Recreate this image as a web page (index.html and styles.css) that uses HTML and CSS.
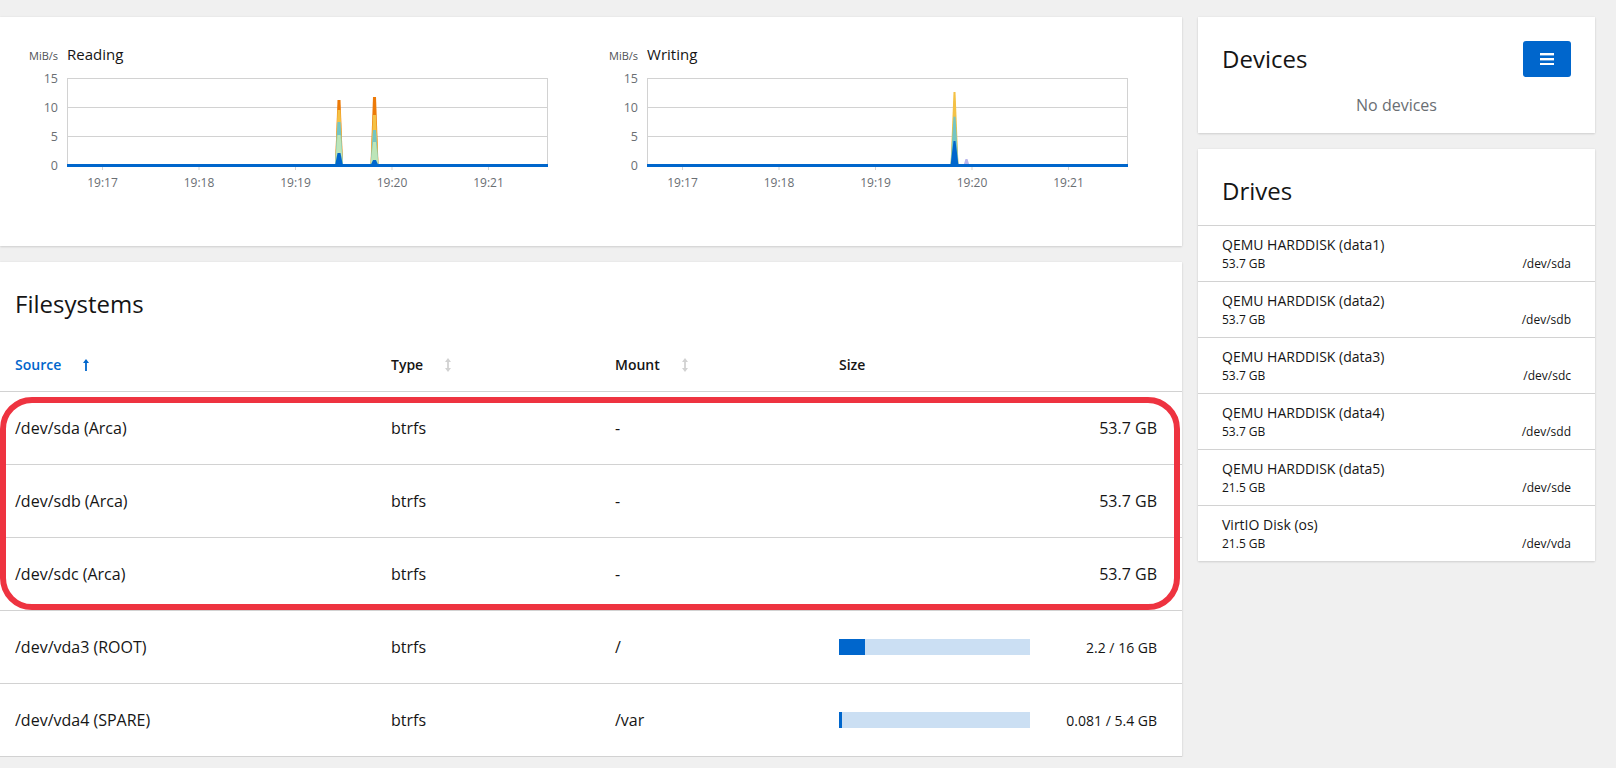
FILE: index.html
```html
<!DOCTYPE html>
<html lang="en">
<head>
<meta charset="utf-8">
<title>Storage</title>
<link rel="stylesheet" href="styles.css">
</head>
<body>
<div class="page">
  <div class="main-col">
    <section class="card charts-card">
      <div class="charts">
        <div class="chart">
          <div class="chart-head"><span class="unit">MiB/s</span><span class="chart-title">Reading</span></div>
          <svg class="plot" width="560" height="130" viewBox="0 0 560 130">
            <g class="grid">
              <line x1="38" y1="12.5" x2="519" y2="12.5"/>
              <line x1="38" y1="41.5" x2="519" y2="41.5"/>
              <line x1="38" y1="70.5" x2="519" y2="70.5"/>
              <line x1="38.5" y1="12.5" x2="38.5" y2="99.5"/>
              <line x1="518.5" y1="12.5" x2="518.5" y2="99.5"/>
              <line x1="73.5" y1="99.5" x2="73.5" y2="104"/>
              <line x1="170" y1="99.5" x2="170" y2="104"/>
              <line x1="266.5" y1="99.5" x2="266.5" y2="104"/>
              <line x1="363" y1="99.5" x2="363" y2="104"/>
              <line x1="459.5" y1="99.5" x2="459.5" y2="104"/>
            </g>
            <g class="ylab">
              <text x="29" y="12.5" dy="0.36em">15</text>
              <text x="29" y="41.5" dy="0.36em">10</text>
              <text x="29" y="70.5" dy="0.36em">5</text>
              <text x="29" y="99.5" dy="0.36em">0</text>
            </g>
            <g class="xlab">
              <text x="73.5" y="116.7" dy="0.36em">19:17</text>
              <text x="170" y="116.7" dy="0.36em">19:18</text>
              <text x="266.5" y="116.7" dy="0.36em">19:19</text>
              <text x="363" y="116.7" dy="0.36em">19:20</text>
              <text x="459.5" y="116.7" dy="0.36em">19:21</text>
            </g>
            <g class="spike">
              <polygon class="s-orange" points="306,99.5 308.5,34 311.5,34 314,99.5"/>
              <polygon class="s-yellow" points="306,99.5 308.5,44 311.5,44 314,99.5"/>
              <polygon class="s-teal" points="306,99.5 308.5,56 311.5,56 314,99.5"/>
              <polygon class="s-green" points="306,99.5 308.5,69 311.5,69 314,99.5"/>
              <polygon class="s-blue" points="306,99.5 308.5,87 311.5,87 314,99.5"/>
              <polygon class="s-orange" points="341.5,99.5 344,31 347,31 349.5,99.5"/>
              <polygon class="s-yellow" points="341.5,99.5 344,49 347,49 349.5,99.5"/>
              <polygon class="s-teal" points="341.5,99.5 344,64 347,64 349.5,99.5"/>
              <polygon class="s-green" points="341.5,99.5 344,76 347,76 349.5,99.5"/>
              <polygon class="s-blue" points="341.5,99.5 344,94 347,94 349.5,99.5"/>
            </g>
            <line class="baseline" x1="38" y1="99.5" x2="519" y2="99.5"/>
          </svg>
        </div>
        <div class="chart">
          <div class="chart-head"><span class="unit">MiB/s</span><span class="chart-title">Writing</span></div>
          <svg class="plot" width="560" height="130" viewBox="0 0 560 130">
            <g class="grid">
              <line x1="38" y1="12.5" x2="519" y2="12.5"/>
              <line x1="38" y1="41.5" x2="519" y2="41.5"/>
              <line x1="38" y1="70.5" x2="519" y2="70.5"/>
              <line x1="38.5" y1="12.5" x2="38.5" y2="99.5"/>
              <line x1="518.5" y1="12.5" x2="518.5" y2="99.5"/>
              <line x1="73.5" y1="99.5" x2="73.5" y2="104"/>
              <line x1="170" y1="99.5" x2="170" y2="104"/>
              <line x1="266.5" y1="99.5" x2="266.5" y2="104"/>
              <line x1="363" y1="99.5" x2="363" y2="104"/>
              <line x1="459.5" y1="99.5" x2="459.5" y2="104"/>
            </g>
            <g class="ylab">
              <text x="29" y="12.5" dy="0.36em">15</text>
              <text x="29" y="41.5" dy="0.36em">10</text>
              <text x="29" y="70.5" dy="0.36em">5</text>
              <text x="29" y="99.5" dy="0.36em">0</text>
            </g>
            <g class="xlab">
              <text x="73.5" y="116.7" dy="0.36em">19:17</text>
              <text x="170" y="116.7" dy="0.36em">19:18</text>
              <text x="266.5" y="116.7" dy="0.36em">19:19</text>
              <text x="363" y="116.7" dy="0.36em">19:20</text>
              <text x="459.5" y="116.7" dy="0.36em">19:21</text>
            </g>
            <g class="spike">
              <polygon class="s-yellow" points="341.5,99.5 344.5,26 346.5,26 349.5,99.5"/>
              <polygon class="s-teal" points="341.5,99.5 344.5,50.7 346.5,50.7 349.5,99.5"/>
              <polygon class="s-blue" points="341.5,99.5 344.5,75 346.5,75 349.5,99.5"/>
              <polygon class="s-lav" points="354.5,99.5 356.5,93 358.5,93 360.5,99.5"/>
            </g>
            <line class="baseline" x1="38" y1="99.5" x2="519" y2="99.5"/>
          </svg>
        </div>
      </div>
    </section>

    <section class="card fs-card">
      <h2 class="card-title fs-title">Filesystems</h2>
      <div class="fs-table">
        <div class="fs-row fs-head">
          <div class="cell sort active">Source
            <svg class="sort-icon" width="6" height="12" viewBox="0 0 6 12"><path d="M3 0 L6 4 L3.9 4 L3.9 12 L2.1 12 L2.1 4 L0 4 Z"/></svg>
          </div>
          <div class="cell sort">Type
            <svg class="sort-icon" width="6" height="14" viewBox="0 0 6 14"><path d="M3 0 L6 4 L3.9 4 L3.9 10 L6 10 L3 14 L0 10 L2.1 10 L2.1 4 L0 4 Z"/></svg>
          </div>
          <div class="cell sort">Mount
            <svg class="sort-icon" width="6" height="14" viewBox="0 0 6 14"><path d="M3 0 L6 4 L3.9 4 L3.9 10 L6 10 L3 14 L0 10 L2.1 10 L2.1 4 L0 4 Z"/></svg>
          </div>
          <div class="cell">Size</div>
        </div>
        <div class="fs-row">
          <div class="cell">/dev/sda (Arca)</div>
          <div class="cell">btrfs</div>
          <div class="cell">-</div>
          <div class="cell size"><span class="size-num">53.7 GB</span></div>
        </div>
        <div class="fs-row">
          <div class="cell">/dev/sdb (Arca)</div>
          <div class="cell">btrfs</div>
          <div class="cell">-</div>
          <div class="cell size"><span class="size-num">53.7 GB</span></div>
        </div>
        <div class="fs-row">
          <div class="cell">/dev/sdc (Arca)</div>
          <div class="cell">btrfs</div>
          <div class="cell">-</div>
          <div class="cell size"><span class="size-num">53.7 GB</span></div>
        </div>
        <div class="fs-row">
          <div class="cell">/dev/vda3 (ROOT)</div>
          <div class="cell">btrfs</div>
          <div class="cell">/</div>
          <div class="cell size">
            <div class="bar"><div class="bar-fill" style="width: 13.75%"></div></div>
            <span class="size-small">2.2 / 16 GB</span>
          </div>
        </div>
        <div class="fs-row">
          <div class="cell">/dev/vda4 (SPARE)</div>
          <div class="cell">btrfs</div>
          <div class="cell">/var</div>
          <div class="cell size">
            <div class="bar"><div class="bar-fill" style="width: 1.5%"></div></div>
            <span class="size-small">0.081 / 5.4 GB</span>
          </div>
        </div>
      </div>
      <div class="highlight"></div>
    </section>
  </div>

  <div class="side-col">
    <section class="card devices-card">
      <div class="card-head">
        <h2 class="card-title">Devices</h2>
        <button class="menu-btn" type="button" aria-label="Menu">
          <svg width="14" height="12.5" viewBox="0 0 14 12.5"><rect x="0" y="0" width="14" height="2.4"/><rect x="0" y="5" width="14" height="2.4"/><rect x="0" y="10" width="14" height="2.4"/></svg>
        </button>
      </div>
      <div class="empty">No devices</div>
    </section>

    <section class="card drives-card">
      <h2 class="card-title drives-title">Drives</h2>
      <ul class="drive-list">
        <li class="drive"><div class="drive-name">QEMU HARDDISK (data1)</div><div class="drive-sub"><span>53.7 GB</span><span>/dev/sda</span></div></li>
        <li class="drive"><div class="drive-name">QEMU HARDDISK (data2)</div><div class="drive-sub"><span>53.7 GB</span><span>/dev/sdb</span></div></li>
        <li class="drive"><div class="drive-name">QEMU HARDDISK (data3)</div><div class="drive-sub"><span>53.7 GB</span><span>/dev/sdc</span></div></li>
        <li class="drive"><div class="drive-name">QEMU HARDDISK (data4)</div><div class="drive-sub"><span>53.7 GB</span><span>/dev/sdd</span></div></li>
        <li class="drive"><div class="drive-name">QEMU HARDDISK (data5)</div><div class="drive-sub"><span>21.5 GB</span><span>/dev/sde</span></div></li>
        <li class="drive"><div class="drive-name">VirtIO Disk (os)</div><div class="drive-sub"><span>21.5 GB</span><span>/dev/vda</span></div></li>
      </ul>
    </section>
  </div>
</div>
</body>
</html>
```

FILE: styles.css
```css
* { box-sizing: border-box; }

html, body {
  margin: 0;
  background: #f0f0f0;
  font-family: "Open Sans", "Liberation Sans", sans-serif;
  color: #151515;
}

.page {
  display: grid;
  grid-template-columns: 1182px 397px;
  column-gap: 16px;
  align-items: start;
  padding: 17px 21px 0 0;
}

.main-col, .side-col {
  display: flex;
  flex-direction: column;
  gap: 16px;
}

.card {
  background: #fff;
  box-shadow: 0 1px 2px 0 rgba(3, 3, 3, 0.12), 0 0 2px 0 rgba(3, 3, 3, 0.06);
}

.card-title {
  margin: 0;
  font-size: 24px;
  line-height: 36px;
  font-weight: 400;
  color: #151515;
}

/* charts */
.charts-card {
  padding: 27px 0 50px 29px;
}

.charts {
  display: grid;
  grid-template-columns: 580px 1fr;
}

.chart-head {
  display: flex;
  align-items: baseline;
  gap: 9px;
  line-height: 21px;
}

.unit {
  font-size: 11px;
  color: #4f5255;
}

.chart-title {
  font-size: 15px;
  color: #151515;
}

.plot {
  display: block;
  overflow: visible;
}

.grid line {
  stroke: #d2d2d2;
  stroke-width: 1;
}

.ylab text {
  font-family: "Open Sans", sans-serif;
  font-size: 12.5px;
  fill: #6a6e73;
  text-anchor: end;
}

.xlab text {
  font-family: "Open Sans", sans-serif;
  font-size: 12px;
  fill: #6a6e73;
  text-anchor: middle;
}

.baseline {
  stroke: #0066cc;
  stroke-width: 3;
}

.s-orange { fill: #ec7a08; }
.s-yellow { fill: #f4c145; }
.s-teal { fill: #73c5c5; }
.s-green { fill: #bde5b8; }
.s-blue { fill: #0066cc; }
.s-lav { fill: #b8b5ec; }

/* filesystems */
.fs-card {
  position: relative;
  padding-top: 24px;
}

.fs-title {
  padding-left: 15px;
  margin-bottom: 16px;
}

.fs-row {
  display: grid;
  grid-template-columns: 391px 224px 224px 1fr;
  border-bottom: 1px solid #d2d2d2;
  font-size: 16px;
  line-height: 24px;
}

.fs-row .cell {
  padding: 24px 0;
  display: flex;
  align-items: center;
}

.fs-row .cell:first-child {
  padding-left: 15px;
}

.fs-row .cell:last-child {
  padding-right: 25px;
}

.fs-head {
  font-size: 14px;
  line-height: 21px;
  font-weight: 600;
}

.fs-head .cell {
  padding: 16px 0;
}

.sort {
  gap: 22px;
}

.sort-icon {
  fill: #d2d2d2;
}

.sort.active {
  color: #0066cc;
}

.sort.active .sort-icon {
  fill: #0066cc;
}

.size {
  justify-content: space-between;
}

.size-num {
  margin-left: auto;
}

.bar {
  width: 191px;
  height: 16px;
  background: #cbdff3;
}

.bar-fill {
  height: 100%;
  background: #0066cc;
}

.size-small {
  font-size: 14px;
  line-height: 21px;
}

.highlight {
  position: absolute;
  left: 0;
  top: 135px;
  width: 1180px;
  height: 213px;
  border: 6px solid #ee3340;
  border-radius: 32px;
  pointer-events: none;
}

/* devices */
.devices-card {
  padding: 24px 24px 16px;
}

.card-head {
  display: flex;
  justify-content: space-between;
  align-items: center;
}

.menu-btn {
  width: 48px;
  height: 36px;
  border: 0;
  border-radius: 3px;
  background: #0066cc;
  display: flex;
  align-items: center;
  justify-content: center;
  padding: 0;
}

.menu-btn svg {
  fill: #fff;
}

.empty {
  margin-top: 16px;
  text-align: center;
  color: #6a6e73;
  font-size: 16px;
  line-height: 24px;
}

/* drives */
.drives-card {
  padding-top: 24px;
}

.drives-title {
  padding-left: 24px;
  margin-bottom: 16px;
}

.drive-list {
  list-style: none;
  margin: 0;
  padding: 0;
}

.drive {
  border-top: 1px solid #d2d2d2;
  padding: 8px 24px;
}

.drive-name {
  font-size: 14px;
  line-height: 21px;
  color: #151515;
}

.drive-sub {
  display: flex;
  justify-content: space-between;
  font-size: 12px;
  line-height: 18px;
  color: #151515;
}
```
